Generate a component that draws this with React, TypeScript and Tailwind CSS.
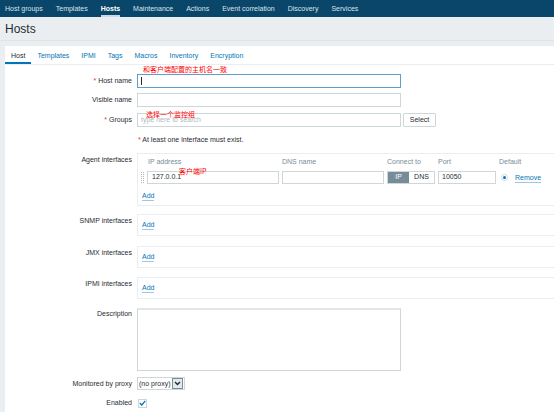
import { ReactNode } from 'react';

// Zabbix "Hosts" edit form, scaled down
const navItems = ['Host groups', 'Templates', 'Hosts', 'Maintenance', 'Actions', 'Event correlation', 'Discovery', 'Services'];
const tabs = ['Host', 'Templates', 'IPMI', 'Tags', 'Macros', 'Inventory', 'Encryption'];

function Label({ children, required, className = '' }: { children: ReactNode; required?: boolean; className?: string }) {
  return (
    <div className={`text-right text-[#1f2c33] leading-[10px] whitespace-nowrap ${className}`}>
      {required && <span className="text-[#e33734]">* </span>}
      {children}
    </div>
  );
}

function AddLink() {
  return <span className="text-[#0275b8] border-b border-[#9fc9e3] leading-[9px]">Add</span>;
}

function Note({ children, className = '' }: { children: ReactNode; className?: string }) {
  return (
    <span className={`absolute text-[7px] leading-[8px] text-[#ff0000] font-['Noto_Sans_CJK_SC',sans-serif] whitespace-nowrap ${className}`}>
      {children}
    </span>
  );
}

function EmptyInterfaces({ label, mt }: { label: string; mt: string }) {
  return (
    <div className={`grid grid-cols-[127px_1fr] gap-x-[5px] ${mt}`}>
      <Label className="pt-[2px]">{label}</Label>
      <div className="h-[22px] border border-[#ebeef0] border-r-0 flex items-center pl-[4px]">
        <AddLink />
      </div>
    </div>
  );
}

export default function App() {
  return (
    <div className="w-[554px] h-[412px] overflow-hidden bg-[#ebeef0] font-['Liberation_Sans',Arial,sans-serif] text-[7px]">
      {/* Top navigation */}
      <div className="h-[17px] bg-[#0a466a] flex items-stretch pl-[5px] gap-[13px]">
        {navItems.map((item) => (
          <div
            key={item}
            className={`flex items-center leading-none ${
              item === 'Hosts' ? 'text-white font-bold border-b-2 border-[#c7dcea] pt-[2px]' : 'text-[#dbe4ea]'
            }`}
          >
            {item}
          </div>
        ))}
      </div>

      {/* Page header */}
      <div className="h-[24px] flex items-center px-[5px] border-b border-[#dfe4e7]">
        <h1 className="text-[12px] leading-none text-[#1f2c33]">Hosts</h1>
      </div>

      {/* Content */}
      <div className="mt-[5px] ml-[5px] bg-white h-[400px]">
        {/* Tabs */}
        <div className="h-[19px] flex border-b border-[#ebeef0]">
          {tabs.map((tab, i) => (
            <div
              key={tab}
              className={`px-[6px] flex items-center leading-none ${
                i === 0 ? 'text-[#1f2c33] border-b-2 border-[#0275b8] pt-[2px]' : 'text-[#0275b8]'
              }`}
            >
              {tab}
            </div>
          ))}
        </div>

        <div className="flex flex-col">
          {/* Host name */}
          <div className="grid grid-cols-[127px_1fr] gap-x-[5px] items-center mt-[9px]">
            <Label required>Host name</Label>
            <div className="relative">
              <div className="w-[264px] h-[14px] border border-[#5f9fca] flex items-center pl-[3px]">
                <span className="w-px h-[8px] bg-[#1f2c33]" />
              </div>
              <Note className="left-[6px] -top-[9px]">和客户端配置的主机名一致</Note>
            </div>
          </div>

          {/* Visible name */}
          <div className="grid grid-cols-[127px_1fr] gap-x-[5px] items-center mt-[5px]">
            <Label>Visible name</Label>
            <div className="w-[264px] h-[14px] border border-[#cfd6d9]" />
          </div>

          {/* Groups */}
          <div className="grid grid-cols-[127px_1fr] gap-x-[5px] items-center mt-[6px]">
            <Label required>Groups</Label>
            <div className="relative flex items-center gap-[2px]">
              <div className="w-[264px] h-[14px] border border-[#cfd6d9] flex items-center pl-[3px] text-[#acbbc2]">
                type here to search
              </div>
              <div className="w-[33px] h-[14px] border border-[#cfd6d9] rounded-[1px] flex items-center justify-center text-[#1f2c33]">
                Select
              </div>
              <Note className="left-[9px] -top-[3px]">选择一个监控组</Note>
            </div>
          </div>

          {/* Required notice */}
          <div className="grid grid-cols-[127px_1fr] gap-x-[5px] mt-[8px]">
            <div />
            <div className="leading-[10px] text-[#1f2c33] pl-[1px]">
              <span className="text-[#e33734]">* </span>At least one interface must exist.
            </div>
          </div>

          {/* Agent interfaces */}
          <div className="grid grid-cols-[127px_1fr] gap-x-[5px] mt-[8px]">
            <Label className="pt-[2px]">Agent interfaces</Label>
            <div className="h-[53px] border border-[#ebeef0] border-r-0 relative">
              <div className="flex leading-[10px] text-[#768d99] pt-[3px]">
                <span className="ml-[10px] w-[134px]">IP address</span>
                <span className="w-[105px]">DNS name</span>
                <span className="w-[51px]">Connect to</span>
                <span className="w-[61px]">Port</span>
                <span>Default</span>
              </div>
              <div className="flex items-center mt-[4px] h-[13px]">
                <svg width="4" height="12" viewBox="0 0 4 12" className="ml-[3px] mr-[2px]">
                  {[0, 2, 4, 6, 8, 10].map((y) => (
                    <g key={y}>
                      <rect x="0" y={y} width="1" height="1" fill="#acbbc2" />
                      <rect x="2" y={y} width="1" height="1" fill="#acbbc2" />
                    </g>
                  ))}
                </svg>
                <div className="w-[132px] h-[13px] border border-[#cfd6d9] flex items-center pl-[4px] text-[#1f2c33]">
                  127.0.0.1
                </div>
                <div className="ml-[3px] w-[102px] h-[13px] border border-[#cfd6d9]" />
                <div className="ml-[3px] w-[48px] h-[13px] flex border border-[#cfd6d9]">
                  <div className="w-[21px] bg-[#768d99] text-white flex items-center justify-center">IP</div>
                  <div className="flex-1 flex items-center justify-center text-[#1f2c33]">DNS</div>
                </div>
                <div className="ml-[3px] w-[58px] h-[13px] border border-[#cfd6d9] flex items-center pl-[3px] text-[#1f2c33]">
                  10050
                </div>
                <div className="ml-[5px] w-[7px] h-[7px] rounded-full border border-[#cfd6d9] flex items-center justify-center">
                  <div className="w-[3px] h-[3px] rounded-full bg-[#0275b8]" />
                </div>
                <span className="ml-[7px] text-[#0275b8] border-b border-[#9fc9e3] leading-[9px]">Remove</span>
              </div>
              <div className="mt-[7px] pl-[4px] flex">
                <AddLink />
              </div>
              <Note className="left-[41px] top-[13px]">客户端IP</Note>
            </div>
          </div>

          <EmptyInterfaces label="SNMP interfaces" mt="mt-[8px]" />
          <EmptyInterfaces label="JMX interfaces" mt="mt-[10px]" />
          <EmptyInterfaces label="IPMI interfaces" mt="mt-[9px]" />

          {/* Description */}
          <div className="grid grid-cols-[127px_1fr] gap-x-[5px] mt-[9px]">
            <Label className="pt-[1px]">Description</Label>
            <div className="w-[264px] h-[63px] border border-[#cfd6d9] border-t-2 border-t-[#e1e6e9]" />
          </div>

          {/* Monitored by proxy */}
          <div className="grid grid-cols-[127px_1fr] gap-x-[5px] items-center mt-[6px]">
            <Label>Monitored by proxy</Label>
            <div className="flex items-center w-[48px] h-[13px] border border-[#cfd6d9] text-[#1f2c33]">
              <span className="pl-[1px] flex-1 leading-none">(no proxy)</span>
              <div className="w-[11px] h-[11px] mr-px border border-[#7d8b92] bg-[#e4e9ec] flex items-center justify-center">
                <svg width="7" height="5" viewBox="0 0 7 5">
                  <path d="M1 1 L3.5 3.5 L6 1" fill="none" stroke="#1f2c33" strokeWidth="1.4" />
                </svg>
              </div>
            </div>
          </div>

          {/* Enabled */}
          <div className="grid grid-cols-[127px_1fr] gap-x-[5px] items-center mt-[8px]">
            <Label>Enabled</Label>
            <div className="ml-[1px] w-[9px] h-[9px] border border-[#cfd6d9] flex items-center justify-center">
              <svg width="7" height="6" viewBox="0 0 7 6">
                <path d="M0.8 3 L2.8 5 L6.3 0.8" fill="none" stroke="#0275b8" strokeWidth="1.3" />
              </svg>
            </div>
          </div>
        </div>
      </div>
    </div>
  );
}
